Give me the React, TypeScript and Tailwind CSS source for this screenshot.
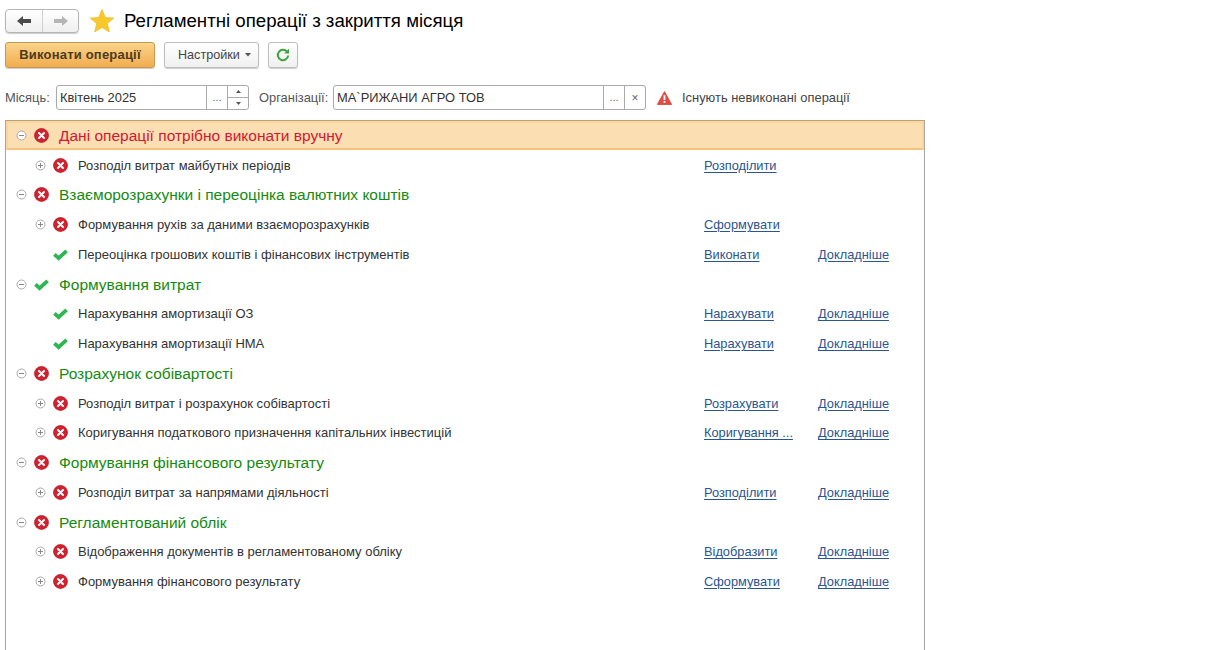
import React from "react";

const XIcon = () => (
  <svg width="15" height="15" viewBox="0 0 15 15" className="shrink-0">
    <circle cx="7.5" cy="7.5" r="7.2" fill="#d3222f" />
    <circle cx="7.5" cy="7.5" r="6.9" fill="none" stroke="#b01c28" strokeWidth="0.6" />
    <path d="M5 5 L10 10 M10 5 L5 10" stroke="#fff" strokeWidth="2" strokeLinecap="round" />
  </svg>
);
const CheckIcon = () => (
  <svg width="15" height="15" viewBox="0 0 15 15" className="shrink-0">
    <path d="M1.4 7.4 L5.6 11.2 L13.6 3.8" fill="none" stroke="#2fb552" strokeWidth="3.8" />
  </svg>
);
const Toggle = ({ plus }: { plus?: boolean }) => (
  <svg width="11" height="11" viewBox="0 0 11 11" className="shrink-0">
    <circle cx="5.5" cy="5.5" r="4.5" fill="#fff" stroke="#a9a9a9" />
    <path d={plus ? "M3 5.5H8M5.5 3V8" : "M3 5.5H8"} stroke="#8a8a8a" strokeWidth="1" />
  </svg>
);

type Row = { group?: boolean; ok?: boolean; text: string; a?: string; more?: boolean; noToggle?: boolean; hl?: boolean };
const rows: Row[] = [
  { group: true, hl: true, text: "Дані операції потрібно виконати вручну" },
  { text: "Розподіл витрат майбутніх періодів", a: "Розподілити" },
  { group: true, text: "Взаєморозрахунки і переоцінка валютних коштів" },
  { text: "Формування рухів за даними взаєморозрахунків", a: "Сформувати" },
  { ok: true, noToggle: true, text: "Переоцінка грошових коштів і фінансових інструментів", a: "Виконати", more: true },
  { group: true, ok: true, text: "Формування витрат" },
  { ok: true, noToggle: true, text: "Нарахування амортизації ОЗ", a: "Нарахувати", more: true },
  { ok: true, noToggle: true, text: "Нарахування амортизації НМА", a: "Нарахувати", more: true },
  { group: true, text: "Розрахунок собівартості" },
  { text: "Розподіл витрат і розрахунок собівартості", a: "Розрахувати", more: true },
  { text: "Коригування податкового призначення капітальних інвестицій", a: "Коригування ...", more: true },
  { group: true, text: "Формування фінансового результату" },
  { text: "Розподіл витрат за напрямами діяльності", a: "Розподілити", more: true },
  { group: true, text: "Регламентований облік" },
  { text: "Відображення документів в регламентованому обліку", a: "Відобразити", more: true },
  { text: "Формування фінансового результату", a: "Сформувати", more: true },
];

const Link = ({ children }: { children: React.ReactNode }) => (
  <span className="text-[12.8px] leading-[15px] text-[#2a5591] underline underline-offset-2">{children}</span>
);

export default function App() {
  return (
    <div className="h-[650px] w-[1229px] overflow-hidden bg-white pl-[5px] font-['Liberation_Sans',Arial,sans-serif] text-[#333]">
      {/* title */}
      <div className="flex h-[42px] items-center">
        <div className="flex h-[24px] w-[74px] items-center rounded-[4px] border border-[#b5b5b5] bg-gradient-to-b from-white to-[#efefef] shadow-[0_1px_1px_rgba(0,0,0,0.2)]">
          <div className="flex h-full w-[37px] items-center justify-center border-r border-[#d0d0d0]">
            <svg width="16" height="12" viewBox="0 0 16 12"><path d="M1 6 L7 1 V4 H15 V8 H7 V11 Z" fill="#4a4a4a" /></svg>
          </div>
          <div className="flex h-full flex-1 items-center justify-center">
            <svg width="16" height="12" viewBox="0 0 16 12"><path d="M15 6 L9 1 V4 H1 V8 H9 V11 Z" fill="#b5b5b5" /></svg>
          </div>
        </div>
        <svg width="26" height="26" viewBox="0 0 26 26" className="ml-[10px]">
          <path d="M13 1.5 L16.4 9.4 L24.8 10.1 L18.4 15.6 L20.4 24 L13 19.5 L5.6 24 L7.6 15.6 L1.2 10.1 L9.6 9.4 Z" fill="#f8c92c" stroke="#e8b418" strokeWidth="0.6" />
        </svg>
        <h1 className="ml-[9px] text-[18.67px] font-normal leading-none text-black">Регламентні операції з закриття місяця</h1>
      </div>

      {/* toolbar */}
      <div className="flex h-[26px] items-center">
        <button className="h-[26px] w-[150px] rounded-[3px] border border-[#c49a52] bg-gradient-to-b from-[#fbd48a] to-[#f0ac4e] text-[13px] font-bold tracking-[0.2px] text-[#4b3a1c] shadow-[0_1px_1px_rgba(0,0,0,0.2)]">Виконати операції</button>
        <button className="ml-[9px] flex h-[26px] w-[95px] items-center rounded-[3px] border border-[#bdbdbd] bg-gradient-to-b from-white to-[#f0f0f0] pl-[13px] text-[12.6px] text-[#444] shadow-[0_1px_1px_rgba(0,0,0,0.2)]">
          Настройки
          <svg width="6" height="4" viewBox="0 0 6 4" className="ml-[5px]"><path d="M0 0H6L3 3.5Z" fill="#555" /></svg>
        </button>
        <button className="ml-[9px] flex h-[26px] w-[30px] items-center justify-center rounded-[3px] border border-[#bdbdbd] bg-gradient-to-b from-white to-[#f0f0f0] shadow-[0_1px_1px_rgba(0,0,0,0.2)]">
          <svg width="14" height="14" viewBox="0 0 14 14">
            <path d="M11.4 4.2 A5.2 5.2 0 1 0 12.2 7.5" fill="none" stroke="#3aa53a" strokeWidth="2" />
            <path d="M8.2 5.4 H13 V0.8 Z" fill="#3aa53a" />
          </svg>
        </button>
      </div>

      {/* filter */}
      <div className="mt-[17px] flex h-[25px] items-center text-[12.9px]">
        <span className="w-[51px] text-[#555]">Місяць:</span>
        <div className="flex h-[25px] w-[193px] items-stretch rounded-[3px] border border-[#aaa]">
          <span className="flex flex-1 items-center pl-[3px] text-[#333]">Квітень 2025</span>
          <span className="flex w-[21px] items-center justify-center border-l border-[#aaa] text-[11px] text-[#666]">...</span>
          <span className="flex w-[21px] flex-col border-l border-[#aaa]">
            <span className="flex flex-1 items-center justify-center border-b border-[#aaa]"><svg width="5" height="3" viewBox="0 0 5 3"><path d="M0 3H5L2.5 0Z" fill="#555" /></svg></span>
            <span className="flex flex-1 items-center justify-center"><svg width="5" height="3" viewBox="0 0 5 3"><path d="M0 0H5L2.5 3Z" fill="#555" /></svg></span>
          </span>
        </div>
        <span className="ml-[10px] w-[74px] text-[#555]">Організації:</span>
        <div className="flex h-[25px] w-[313px] items-stretch rounded-[3px] border border-[#aaa]">
          <span className="flex flex-1 items-center pl-[3px] text-[#333]">МА`РИЖАНИ АГРО ТОВ</span>
          <span className="flex w-[21px] items-center justify-center border-l border-[#aaa] text-[11px] text-[#666]">...</span>
          <span className="flex w-[21px] items-center justify-center border-l border-[#aaa] text-[12px] text-[#666]">×</span>
        </div>
        <svg width="15" height="14" viewBox="0 0 15 14" className="ml-[11px]">
          <path d="M7.5 0.6 L14.6 13.4 H0.4 Z" fill="#dd4f43" stroke="#dd4f43" strokeLinejoin="round" />
          <path d="M7.5 4.2V9" stroke="#fff" strokeWidth="1.8" />
          <rect x="6.6" y="10" width="1.8" height="1.8" fill="#fff" />
        </svg>
        <span className="ml-[10px] text-[#444]">Існують невиконані операції</span>
      </div>

      {/* tree */}
      <div className="mt-[10px] h-[540px] w-[920px] border border-[#a5a5a5] border-t-[#b9a27e]">
        {rows.map((r, i) => (
          <div
            key={i}
            className={
              "flex h-[29.75px] items-center leading-[15px] " +
              (r.hl ? "-mt-[0.5px] border-2 border-[#fbd49e] border-b-[#f7c27c] bg-[#fcdeb3] pl-[8px]" : r.group ? "pl-[10px]" : "pl-[29px]")
            }
          >
            <span className="flex w-[11px] shrink-0 items-center justify-center">{!r.noToggle && <Toggle plus={!r.group} />}</span>
            <span className="ml-[7px] flex w-[15px] shrink-0">{r.ok ? <CheckIcon /> : <XIcon />}</span>
            {r.group ? (
              <span className={"ml-[10px] text-[15.5px] " + (r.hl ? "text-[#d3172f]" : "text-[#158a10]")}>{r.text}</span>
            ) : (
              <span className="ml-[10px] w-[626px] shrink-0 text-[13px] text-[#333]">{r.text}</span>
            )}
            {!r.group && (
              <>
                <span className="flex w-[114px] shrink-0">{r.a && <Link>{r.a}</Link>}</span>
                {r.more && <Link>Докладніше</Link>}
              </>
            )}
          </div>
        ))}
      </div>
    </div>
  );
}
